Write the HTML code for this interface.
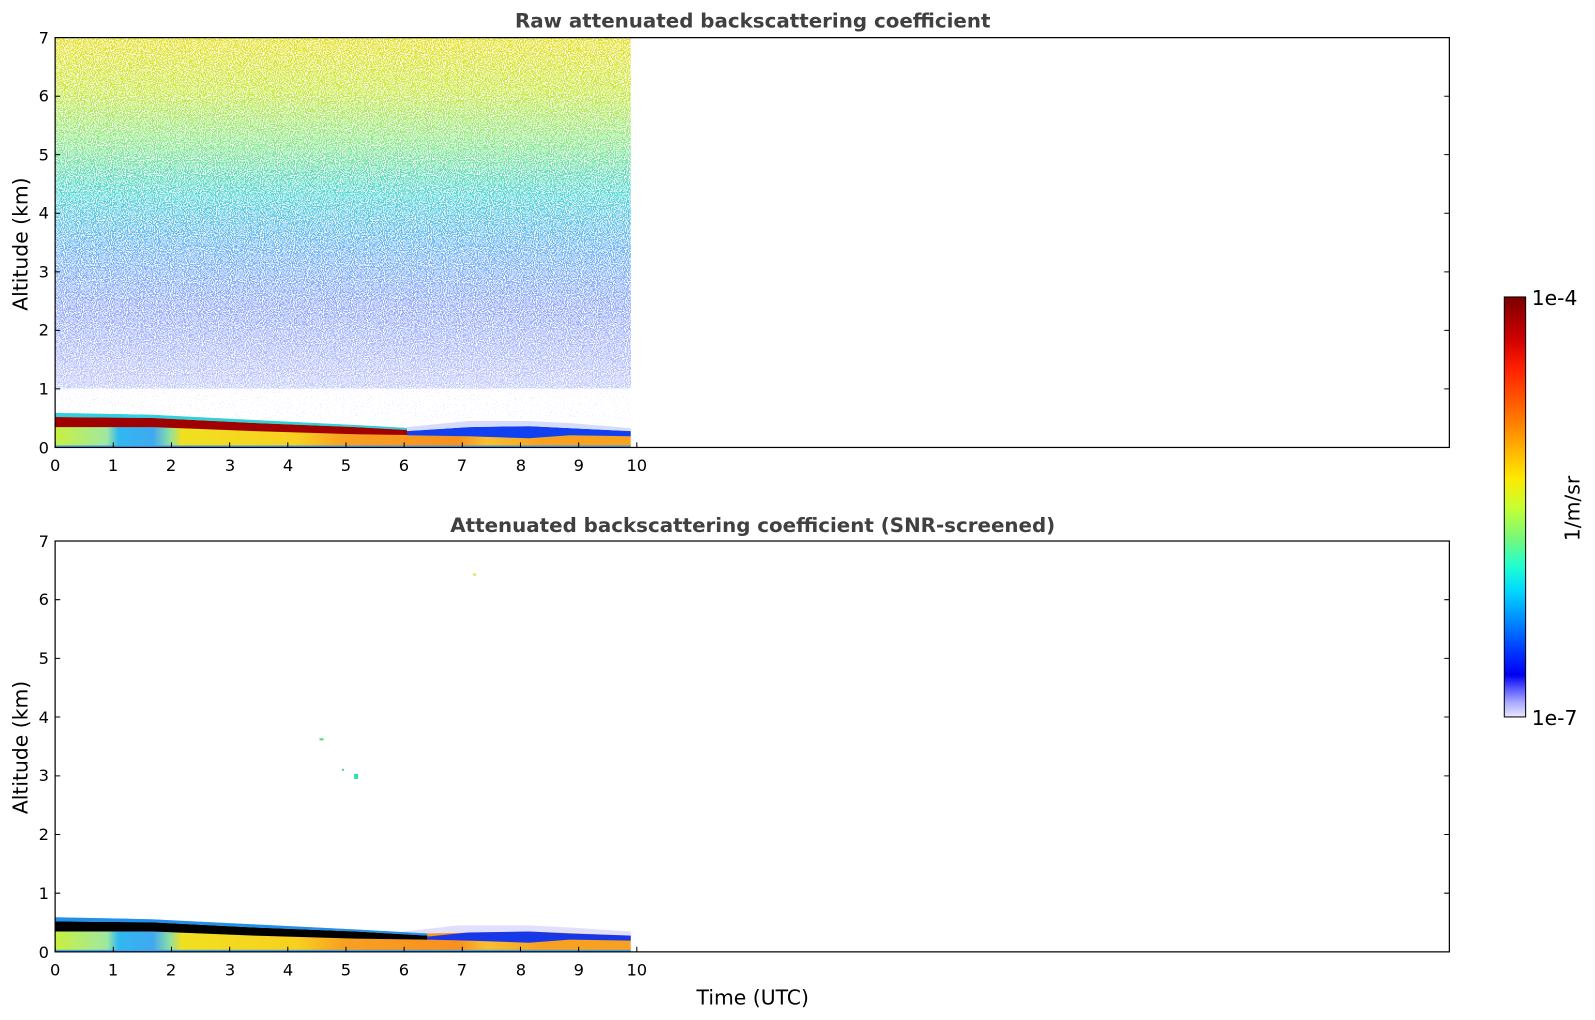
<!DOCTYPE html>
<html><head><meta charset="utf-8"><style>
html,body{margin:0;padding:0;background:#fff;width:1595px;height:1020px;overflow:hidden}
svg{display:block}
text{font-family:"DejaVu Sans","Liberation Sans",sans-serif;fill:#000}
.t{font-size:16px}
.ti{font-size:19.5px;font-weight:bold;fill:#404040}
.al{font-size:20px}
</style></head><body>
<svg width="1595" height="1020" viewBox="0 0 1568 1003" xmlns="http://www.w3.org/2000/svg">
<defs>
<linearGradient id="sky" x1="0" y1="0" x2="0" y2="1">
<stop offset="0" stop-color="#e8e020"/>
<stop offset="0.15" stop-color="#c8e830"/>
<stop offset="0.3" stop-color="#80e880"/>
<stop offset="0.45" stop-color="#30d0d0"/>
<stop offset="0.6" stop-color="#2090f0"/>
<stop offset="0.78" stop-color="#2050f8"/>
<stop offset="1" stop-color="#1030ff"/>
</linearGradient>
<linearGradient id="fade" x1="0" y1="0" x2="0" y2="1">
<stop offset="0" stop-color="#fff" stop-opacity="0"/>
<stop offset="0.4" stop-color="#fff" stop-opacity="0.1"/>
<stop offset="0.65" stop-color="#fff" stop-opacity="0.4"/>
<stop offset="0.85" stop-color="#fff" stop-opacity="0.6"/>
<stop offset="1" stop-color="#fff" stop-opacity="0.75"/>
</linearGradient>
<filter id="spk" x="0" y="0" width="1" height="1">
<feTurbulence type="fractalNoise" baseFrequency="0.95" numOctaves="1" seed="3" result="n"/>
<feColorMatrix in="n" type="matrix" values="0 0 0 0 1  0 0 0 0 1  0 0 0 0 1  -20 0 0 0 9.8" result="w"/>
<feComposite in="w" in2="SourceGraphic" operator="atop"/>
</filter>
<filter id="spk2" x="0" y="0" width="1" height="1">
<feTurbulence type="fractalNoise" baseFrequency="0.95" numOctaves="1" seed="7" result="n"/>
<feColorMatrix in="n" type="matrix" values="0 0 0 0 1  0 0 0 0 1  0 0 0 0 1  -20 0 0 0 14" result="w"/>
<feComposite in="w" in2="SourceGraphic" operator="atop"/>
</filter>
<linearGradient id="cb" x1="0" y1="0" x2="0" y2="1">
<stop offset="0" stop-color="#7a0000"/>
<stop offset="0.1" stop-color="#d00000"/>
<stop offset="0.17" stop-color="#ff2000"/>
<stop offset="0.28" stop-color="#ff7000"/>
<stop offset="0.36" stop-color="#ffb000"/>
<stop offset="0.43" stop-color="#ffe800"/>
<stop offset="0.5" stop-color="#c8ff30"/>
<stop offset="0.58" stop-color="#70f880"/>
<stop offset="0.64" stop-color="#20ffd0"/>
<stop offset="0.7" stop-color="#00d8ff"/>
<stop offset="0.78" stop-color="#0080ff"/>
<stop offset="0.85" stop-color="#0030ff"/>
<stop offset="0.9" stop-color="#0000f0"/>
<stop offset="0.93" stop-color="#5050ff"/>
<stop offset="0.965" stop-color="#a8a8ff"/>
<stop offset="1" stop-color="#e8e8ff"/>
</linearGradient>
<linearGradient id="gnd" x1="0" y1="0" x2="1" y2="0">
<stop offset="0" stop-color="#c8f040"/>
<stop offset="0.09" stop-color="#a0e8a0"/>
<stop offset="0.11" stop-color="#30b8f0"/>
<stop offset="0.17" stop-color="#40a8f0"/>
<stop offset="0.2" stop-color="#90e0a0"/>
<stop offset="0.22" stop-color="#f0e020"/>
<stop offset="0.42" stop-color="#f8d020"/>
<stop offset="0.5" stop-color="#f8a020"/>
<stop offset="0.7" stop-color="#f89020"/>
<stop offset="0.75" stop-color="#f8c030"/>
<stop offset="0.85" stop-color="#f8a020"/>
<stop offset="1" stop-color="#f8a020"/>
</linearGradient>
</defs>

<!-- TOP PLOT -->
<text class="ti" x="740" y="27" text-anchor="middle">Raw attenuated backscattering coefficient</text>
<g filter="url(#spk)">
<rect x="54" y="37" width="566" height="345" fill="url(#sky)"/>
</g>
<rect x="54" y="37" width="566" height="345" fill="url(#fade)"/>
<g filter="url(#spk2)"><rect x="54" y="382" width="566" height="30" fill="#dcdefc"/></g>
<polygon points="54,440 54,406 150,408 250,413 350,418 420,422 520,420 620,424 620,440" fill="url(#gnd)"/>
<polygon points="54,410 150,411 250,416 350,420 420,424 420,428 350,427 250,424 150,420 54,420" fill="#a00000"/>
<polygon points="54,406 150,408 250,413 350,418 420,422 420,424 350,420 250,416 150,411 54,410" fill="#30d0e0"/>
<polygon points="400,424 460,420 520,419 560,421 620,424 620,429 560,428 520,431 460,429 400,428" fill="#1040f0"/>
<polygon points="400,424 460,420 520,419 560,421 620,424 620,421 560,416 520,414 460,414 400,420" fill="#d8dcfc"/>
<rect x="54" y="438" width="566" height="2" fill="#40a0f0"/>
<rect x="54" y="37" width="1371" height="403" fill="none" stroke="#000" stroke-width="1.2"/>
<g stroke="#000" stroke-width="1">
<path d="M54 440v-5M111.2 440v-5M168.4 440v-5M225.6 440v-5M282.8 440v-5M340 440v-5M397.2 440v-5M454.4 440v-5M511.6 440v-5M568.8 440v-5M626 440v-5"/>
<path d="M54 382.4h5M54 324.9h5M54 267.3h5M54 209.7h5M54 152.1h5M54 94.6h5M1425 382.4h-5M1425 324.9h-5M1425 267.3h-5M1425 209.7h-5M1425 152.1h-5M1425 94.6h-5"/>
</g>
<g text-anchor="end">
<text class="t" x="48" y="446">0</text><text class="t" x="48" y="388">1</text><text class="t" x="48" y="330">2</text><text class="t" x="48" y="273">3</text><text class="t" x="48" y="215">4</text><text class="t" x="48" y="158">5</text><text class="t" x="48" y="100">6</text><text class="t" x="48" y="43">7</text>
</g>
<g text-anchor="middle">
<text class="t" x="54" y="463">0</text><text class="t" x="111" y="463">1</text><text class="t" x="168" y="463">2</text><text class="t" x="226" y="463">3</text><text class="t" x="283" y="463">4</text><text class="t" x="340" y="463">5</text><text class="t" x="397" y="463">6</text><text class="t" x="454" y="463">7</text><text class="t" x="512" y="463">8</text><text class="t" x="569" y="463">9</text><text class="t" x="626" y="463">10</text>
</g>
<text class="al" transform="translate(27 240) rotate(-90)" text-anchor="middle">Altitude (km)</text>

<!-- BOTTOM PLOT -->
<text class="ti" x="740" y="523" text-anchor="middle">Attenuated backscattering coefficient (SNR-screened)</text>
<polygon points="380,918 450,910 520,910 560,912 620,916 620,926 380,926" fill="#e0e0fc"/>
<polygon points="54,936 54,902 150,904 250,909 350,914 420,918 520,916 620,920 620,936" fill="url(#gnd)"/>
<polygon points="54,906 150,907 250,912 350,916 420,920 420,924 350,923 250,920 150,916 54,916" fill="#000"/>
<polygon points="54,902 150,904 250,909 350,914 420,918 420,920 350,916 250,912 150,907 54,906" fill="#2090f0"/>
<polygon points="420,921 460,917 520,916 560,918 620,920 620,925 560,924 520,927 460,925 420,924" fill="#1838e8"/>
<rect x="54" y="934" width="566" height="2" fill="#40a0f0"/>
<rect x="465" y="564" width="3" height="2" fill="#c8f040"/>
<rect x="314" y="726" width="4" height="2" fill="#40e080"/>
<rect x="348" y="761" width="4" height="5" fill="#30e0b0"/>
<rect x="336" y="756" width="2" height="2" fill="#40d0c0"/>
<rect x="54" y="532" width="1371" height="404" fill="none" stroke="#000" stroke-width="1.2"/>
<g stroke="#000" stroke-width="1">
<path d="M54 936v-5M111.2 936v-5M168.4 936v-5M225.6 936v-5M282.8 936v-5M340 936v-5M397.2 936v-5M454.4 936v-5M511.6 936v-5M568.8 936v-5M626 936v-5"/>
<path d="M54 878.3h5M54 820.6h5M54 762.9h5M54 705.1h5M54 647.4h5M54 589.7h5M1425 878.3h-5M1425 820.6h-5M1425 762.9h-5M1425 705.1h-5M1425 647.4h-5M1425 589.7h-5"/>
</g>
<g text-anchor="end">
<text class="t" x="48" y="942">0</text><text class="t" x="48" y="884">1</text><text class="t" x="48" y="826">2</text><text class="t" x="48" y="768">3</text><text class="t" x="48" y="711">4</text><text class="t" x="48" y="653">5</text><text class="t" x="48" y="595">6</text><text class="t" x="48" y="538">7</text>
</g>
<g text-anchor="middle">
<text class="t" x="54" y="959">0</text><text class="t" x="111" y="959">1</text><text class="t" x="168" y="959">2</text><text class="t" x="226" y="959">3</text><text class="t" x="283" y="959">4</text><text class="t" x="340" y="959">5</text><text class="t" x="397" y="959">6</text><text class="t" x="454" y="959">7</text><text class="t" x="512" y="959">8</text><text class="t" x="569" y="959">9</text><text class="t" x="626" y="959">10</text>
</g>
<text class="al" transform="translate(27 735) rotate(-90)" text-anchor="middle">Altitude (km)</text>
<text class="al" x="740" y="988" text-anchor="middle">Time (UTC)</text>

<!-- COLORBAR -->
<rect x="1479" y="292" width="21" height="413" fill="url(#cb)" stroke="#000" stroke-width="1"/>
<text class="al" x="1506" y="300">1e-4</text>
<text class="al" x="1506" y="713">1e-7</text>
<text class="al" transform="translate(1553 500) rotate(-90)" text-anchor="middle">1/m/sr</text>
</svg>
</body></html>
